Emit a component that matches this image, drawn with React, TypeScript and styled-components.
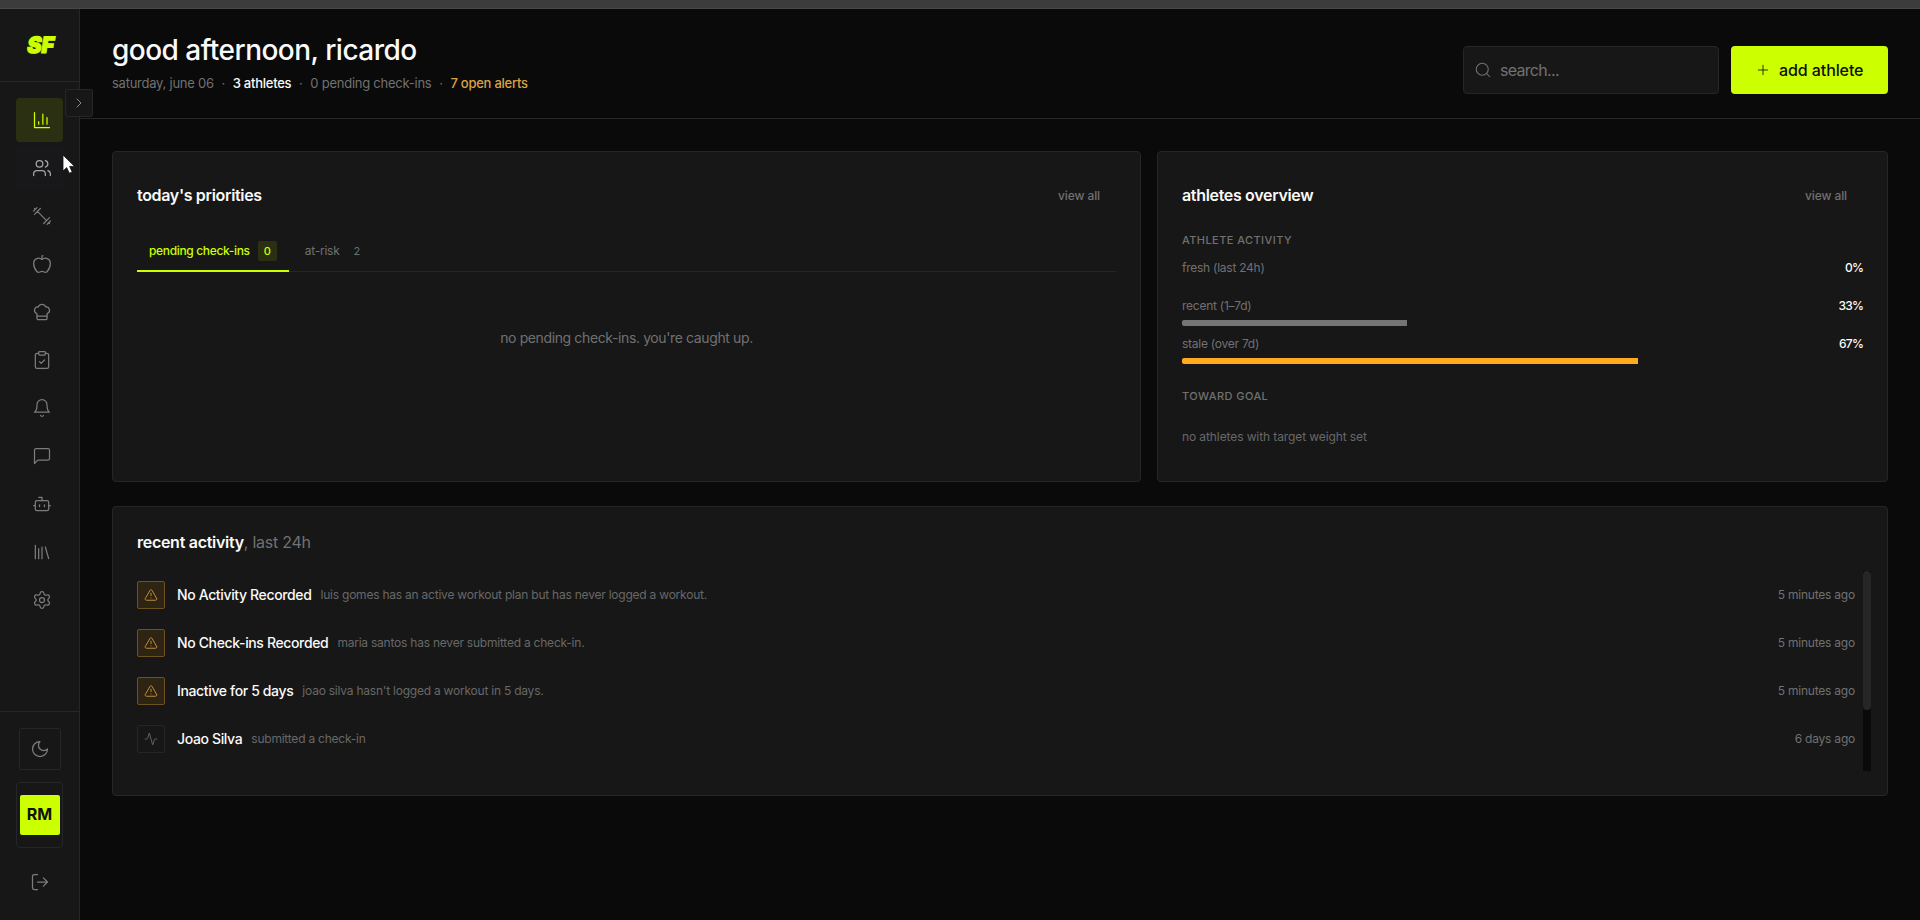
import React from "react";
import styled, { createGlobalStyle, css } from "styled-components";
import {
  Activity, Apple, Bot, ChefHat, ChevronRight, ClipboardCheck, Plus, Search, Settings, TriangleAlert, Users,
} from "lucide-react";

const c = {
  page: "#0a0a0a",
  panel: "#171717",
  line: "#262626",
  muted: "#717171",
  dim: "#686868",
  text: "#fafafa",
  lime: "#ccff00",
  amber: "#ffab1f",
};

const GlobalStyle = createGlobalStyle`
  *, *::before, *::after { box-sizing: border-box; }
  body {
    margin: 0;
    background: ${c.page};
    color: ${c.text};
    font-family: Inter, "Liberation Sans", sans-serif;
    overflow: hidden;
  }
  button, input { font-family: inherit; }
  svg { display: block; flex: none; }
`;

const Screen = styled.div`
  display: flex;
  flex-direction: column;
  height: 920px;
`;
const WindowEdge = styled.div`
  flex: none;
  height: 9px;
  background: #3c3c3c;
  border-bottom: 1px solid #484848;
`;
const Body = styled.div`
  flex: 1;
  display: flex;
  min-height: 0;
`;

const Sidebar = styled.aside`
  position: relative;
  flex: none;
  width: 80px;
  display: flex;
  flex-direction: column;
  background: ${c.panel};
  border-right: 1px solid ${c.line};
`;
const Brand = styled.div`
  height: 73px;
  display: flex;
  align-items: center;
  justify-content: center;
  border-bottom: 1px solid ${c.line};
`;
const Nav = styled.nav`
  flex: 1;
  display: flex;
  flex-direction: column;
  gap: 4px;
  padding: 16px;
`;
const NavItem = styled.a<{ $state?: "active" | "hover" }>`
  height: 44px;
  display: flex;
  align-items: center;
  padding-left: 16px;
  border-radius: 4px;
  color: #7c7c7c;
  ${(p) => p.$state === "active" && css`background: #2b3012; color: ${c.lime};`}
  ${(p) => p.$state === "hover" && css`background: #18181a; color: #a6a6a6;`}
`;
const Collapse = styled.button`
  position: absolute;
  left: 65px;
  top: 80px;
  width: 28px;
  height: 28px;
  padding: 0;
  display: flex;
  align-items: center;
  justify-content: center;
  background: ${c.panel};
  border: 1px solid ${c.line};
  border-radius: 2px;
  color: #8a8a8a;
`;
const SideFoot = styled.div`
  display: flex;
  flex-direction: column;
  align-items: center;
  height: 209px;
  padding-top: 16px;
  border-top: 1px solid ${c.line};
  color: #7c7c7c;
`;
const ThemeButton = styled.button`
  width: 42px;
  height: 42px;
  padding: 0;
  display: flex;
  align-items: center;
  justify-content: center;
  background: none;
  border: 1px solid ${c.line};
  border-radius: 2px;
  color: inherit;
`;
const Profile = styled.div`
  width: 47px;
  height: 66px;
  margin: 12px 0 24px;
  display: flex;
  align-items: center;
  justify-content: center;
  border: 1px solid ${c.line};
  border-radius: 4px;
`;
const Avatar = styled.div`
  flex: none;
  width: 40px;
  height: 40px;
  border-radius: 2px;
  background: ${c.lime};
  color: #111;
  font-size: 16px;
  font-weight: 700;
  line-height: 39px;
  text-align: center;
`;

const Main = styled.main`
  flex: 1;
  min-width: 0;
  display: flex;
  flex-direction: column;
`;
const Header = styled.header`
  height: 110px;
  display: flex;
  justify-content: space-between;
  padding: 24px 32px 0;
  border-bottom: 1px solid ${c.line};
`;
const Greeting = styled.h1`
  margin: 0 0 6px;
  font-size: 28px;
  font-weight: 500;
  line-height: 34px;
  letter-spacing: -0.52px;
`;
const Summary = styled.div`
  display: flex;
  font-size: 13px;
  line-height: 20px;
  letter-spacing: -0.25px;
  color: ${c.muted};
`;
const Fact = styled.span<{ $tone?: "strong" | "warn" }>`
  ${(p) => p.$tone === "strong" && css`color: ${c.text}; font-weight: 500;`}
  ${(p) => p.$tone === "warn" && css`color: #dba244; font-weight: 500;`}
`;
const Dot = styled.span`
  width: 19px;
  text-align: center;
`;
const Tools = styled.div`
  display: flex;
  gap: 12px;
  padding-top: 13px;
`;
const SearchBox = styled.label`
  width: 256px;
  height: 48px;
  display: flex;
  align-items: center;
  gap: 8px;
  padding: 0 10px 1px;
  background: ${c.panel};
  border: 1px solid ${c.line};
  border-radius: 4px;
  color: ${c.muted};
`;
const SearchInput = styled.input`
  flex: 1;
  min-width: 0;
  padding: 0;
  border: 0;
  outline: 0;
  background: none;
  font-size: 16px;
  letter-spacing: -0.7px;
  &::placeholder { color: ${c.muted}; opacity: 1; }
`;
const AddButton = styled.button`
  width: 157px;
  height: 48px;
  display: flex;
  align-items: center;
  gap: 8px;
  padding: 0 0 1px 24px;
  border: 0;
  border-radius: 4px;
  background: ${c.lime};
  color: #0f0f0f;
  font-size: 16px;
  font-weight: 500;
  letter-spacing: -0.09px;
  white-space: nowrap;
`;

const Content = styled.div`
  padding: 32px;
  display: grid;
  grid-template-columns: 1029px 731px;
  grid-template-rows: 331px 290px;
  column-gap: 16px;
  row-gap: 24px;
`;
const Card = styled.section<{ $wide?: boolean }>`
  min-width: 0;
  padding: 24px;
  background: ${c.panel};
  border: 1px solid ${c.line};
  border-radius: 4px;
  ${(p) => p.$wide && css`grid-column: 1 / -1; padding-right: 16px;`}
`;
const CardHead = styled.div`
  height: 38px;
  display: flex;
  align-items: center;
  justify-content: space-between;
`;
const CardTitle = styled.h2`
  margin: 0;
  font-size: 16px;
  font-weight: 600;
  line-height: 24px;
  letter-spacing: -0.33px;
`;
const ActivityTitle = styled(CardTitle)`
  line-height: 23px;
  letter-spacing: -0.28px;
`;
const TitleNote = styled.span`
  font-weight: 400;
  letter-spacing: -0.25px;
  color: ${c.muted};
`;
const ViewAll = styled.a`
  padding: 0 16px;
  font-size: 12px;
  font-weight: 500;
  letter-spacing: -0.1px;
  color: ${c.muted};
`;

const Tabs = styled.div`
  height: 40px;
  margin-top: 18px;
  display: flex;
  gap: 4px;
  box-shadow: inset 0 -1px ${c.line};
`;
const Tab = styled.div<{ $active?: boolean }>`
  display: flex;
  align-items: center;
  gap: 8px;
  padding: 0 12px 1px;
  font-size: 12px;
  color: ${(p) => (p.$active ? c.lime : c.muted)};
  font-weight: ${(p) => (p.$active ? 500 : 400)};
  border-bottom: 2px solid ${(p) => (p.$active ? c.lime : "transparent")};
`;
const TabLabel = styled.span<{ $active?: boolean }>`
  letter-spacing: ${(p) => (p.$active ? "-0.34px" : "-0.25px")};
`;
const Count = styled.span<{ $active?: boolean }>`
  height: 20px;
  padding: 0 6px;
  border-radius: 2px;
  font-size: 11px;
  line-height: 20px;
  background: ${(p) => (p.$active ? "#2b3012" : "transparent")};
`;
const Empty = styled.p`
  margin: 56px 0 0;
  text-align: center;
  font-size: 14px;
  line-height: 20px;
  letter-spacing: -0.38px;
  color: ${c.muted};
`;

const SectionLabel = styled.h3<{ $top: number }>`
  margin: ${(p) => p.$top}px 0 10px;
  font-size: 11px;
  font-weight: 500;
  line-height: 18px;
  letter-spacing: 0.42px;
  text-transform: uppercase;
  color: ${c.muted};
`;
const Meter = styled.div`
  margin-bottom: 9px;
`;
const MeterText = styled.div`
  display: flex;
  justify-content: space-between;
  margin-bottom: 5px;
  font-size: 12px;
  line-height: 18px;
  letter-spacing: -0.25px;
  color: ${c.muted};
`;
const Percent = styled.span`
  color: ${c.text};
  font-weight: 500;
  letter-spacing: -0.8px;
`;
const Track = styled.div`
  height: 6px;
  border-radius: 2px;
  overflow: hidden;
`;
const Fill = styled.div<{ $color: string }>`
  height: 100%;
  background: ${(p) => p.$color};
`;
const GoalNote = styled.p`
  margin: 23px 0 0;
  font-size: 12px;
  line-height: 18px;
  letter-spacing: -0.1px;
  color: ${c.dim};
`;

const Feed = styled.div`
  display: flex;
  height: 200px;
  margin-top: 17px;
`;
const FeedList = styled.ul`
  flex: 1;
  margin: 0;
  padding: 0 8px 0 0;
  list-style: none;
`;
const FeedRow = styled.li`
  height: 48px;
  display: flex;
  align-items: center;
`;
const FeedIcon = styled.span<{ $warn: boolean }>`
  flex: none;
  width: 28px;
  height: 28px;
  margin-right: 12px;
  display: flex;
  align-items: center;
  justify-content: center;
  border: 1px solid ${(p) => (p.$warn ? "#71501f" : c.line)};
  border-radius: 2px;
  background: ${(p) => (p.$warn ? "#2d2414" : "transparent")};
  color: ${(p) => (p.$warn ? "#cf9338" : "#6c6c6c")};
`;
const FeedTitle = styled.span`
  margin-right: 9px;
  font-size: 14px;
  font-weight: 500;
  line-height: 20px;
  letter-spacing: -0.36px;
`;
const FeedDetail = styled.span`
  flex: 1;
  font-size: 12px;
  line-height: 18px;
  letter-spacing: -0.225px;
  color: ${c.dim};
`;
const FeedTime = styled.span`
  font-size: 12px;
  line-height: 18px;
  letter-spacing: -0.22px;
  color: ${c.muted};
`;
const ScrollTrack = styled.div`
  width: 8px;
  background: ${c.page};
`;
const ScrollThumb = styled.div`
  height: 139px;
  border-radius: 4px;
  background: #262626;
`;
const Pointer = styled.svg`
  position: absolute;
  left: 62px;
  top: 154px;
`;

const Glyph = ({ d, size = 20 }: { d: string; size?: number }) => (
  <svg width={size} height={size} viewBox="0 0 24 24" fill="none" stroke="currentColor" strokeWidth={1.5} strokeLinecap="round" strokeLinejoin="round">
    <path d={d} />
  </svg>
);

const Logo = () => (
  <svg width="60" height="40" viewBox="0 0 60 40" fill={c.lime} stroke={c.lime} strokeWidth="1.2">
    <text x="0" y="0" transform="translate(16.2 28.2) skewX(-9)" fontFamily="Inter" fontWeight="900" fontSize="22.5" textLength="27" lengthAdjust="spacingAndGlyphs">SF</text>
  </svg>
);

const line = { size: 20, strokeWidth: 1.5 };
const nav: { icon: React.ReactNode; state?: "active" | "hover" }[] = [
  { icon: <Glyph d="M3 3v18h18M18 17V9M13 17V5M8 17v-3" />, state: "active" },
  { icon: <Users {...line} />, state: "hover" },
  { icon: <Glyph d="m6.5 6.5 11 11M21 21l-1-1M3 3l1 1M18 22l4-4M2 6l4-4M3 10l7-7M14 21l7-7" /> },
  { icon: <Apple {...line} /> },
  { icon: <ChefHat {...line} /> },
  { icon: <ClipboardCheck {...line} /> },
  { icon: <Glyph d="M6 8a6 6 0 0 1 12 0c0 7 3 9 3 9H3s3-2 3-9M10.3 21a1.94 1.94 0 0 0 3.4 0" /> },
  { icon: <Glyph d="M21 15a2 2 0 0 1-2 2H7l-4 4V5a2 2 0 0 1 2-2h14a2 2 0 0 1 2 2z" /> },
  { icon: <Bot {...line} /> },
  { icon: <Glyph d="m16 6 4 14M12 6v14M8 8v12M4 4v16" /> },
  { icon: <Settings {...line} /> },
];

const meters = [
  { label: "fresh (last 24h)", value: 0, color: c.lime },
  { label: "recent (1–7d)", value: 33, color: "#757575" },
  { label: "stale (over 7d)", value: 67, color: c.amber },
];

const feed = [
  { title: "No Activity Recorded", detail: "luis gomes has an active workout plan but has never logged a workout.", time: "5 minutes ago", warn: true },
  { title: "No Check-ins Recorded", detail: "maria santos has never submitted a check-in.", time: "5 minutes ago", warn: true },
  { title: "Inactive for 5 days", detail: "joao silva hasn't logged a workout in 5 days.", time: "5 minutes ago", warn: true },
  { title: "Joao Silva", detail: "submitted a check-in", time: "6 days ago", warn: false },
];

export default function App() {
  return (
    <Screen>
      <GlobalStyle />
      <WindowEdge />
      <Body>
        <Sidebar>
          <Brand><Logo /></Brand>
          <Nav>
            {nav.map((n, i) => <NavItem key={i} $state={n.state}>{n.icon}</NavItem>)}
          </Nav>
          <SideFoot>
            <ThemeButton><Glyph d="M12 3a6 6 0 0 0 9 9 9 9 0 1 1-9-9Z" /></ThemeButton>
            <Profile><Avatar>RM</Avatar></Profile>
            <Glyph d="M9 21H5a2 2 0 0 1-2-2V5a2 2 0 0 1 2-2h4M16 17l5-5-5-5M21 12H9" />
          </SideFoot>
          <Collapse><ChevronRight size={16} strokeWidth={1.5} /></Collapse>
        </Sidebar>
        <Main>
          <Header>
            <div>
              <Greeting>good afternoon, ricardo</Greeting>
              <Summary>
                <Fact>saturday, june 06</Fact><Dot>·</Dot>
                <Fact $tone="strong">3 athletes</Fact><Dot>·</Dot>
                <Fact>0 pending check-ins</Fact><Dot>·</Dot>
                <Fact $tone="warn">7 open alerts</Fact>
              </Summary>
            </div>
            <Tools>
              <SearchBox>
                <Search size={18} strokeWidth={1.4} />
                <SearchInput placeholder="search..." />
              </SearchBox>
              <AddButton><Plus size={16} strokeWidth={1.25} />add athlete</AddButton>
            </Tools>
          </Header>
          <Content>
            <Card>
              <CardHead><CardTitle>today's priorities</CardTitle><ViewAll>view all</ViewAll></CardHead>
              <Tabs>
                <Tab $active><TabLabel $active>pending check-ins</TabLabel><Count $active>0</Count></Tab>
                <Tab><TabLabel>at-risk</TabLabel><Count>2</Count></Tab>
              </Tabs>
              <Empty>no pending check-ins. you're caught up.</Empty>
            </Card>
            <Card>
              <CardHead><CardTitle>athletes overview</CardTitle><ViewAll>view all</ViewAll></CardHead>
              <SectionLabel $top={17}>athlete activity</SectionLabel>
              {meters.map((m) => (
                <Meter key={m.label}>
                  <MeterText><span>{m.label}</span><Percent>{m.value}%</Percent></MeterText>
                  <Track><Fill $color={m.color} style={{ width: `${m.value}%` }} /></Track>
                </Meter>
              ))}
              <SectionLabel $top={23}>toward goal</SectionLabel>
              <GoalNote>no athletes with target weight set</GoalNote>
            </Card>
            <Card $wide>
              <ActivityTitle>recent activity<TitleNote>, last 24h</TitleNote></ActivityTitle>
              <Feed>
                <FeedList>
                  {feed.map((f) => (
                    <FeedRow key={f.title}>
                      <FeedIcon $warn={f.warn}>
                        {f.warn ? <TriangleAlert size={14} strokeWidth={1.6} /> : <Activity size={14} strokeWidth={1.5} />}
                      </FeedIcon>
                      <FeedTitle>{f.title}</FeedTitle>
                      <FeedDetail>{f.detail}</FeedDetail>
                      <FeedTime>{f.time}</FeedTime>
                    </FeedRow>
                  ))}
                </FeedList>
                <ScrollTrack><ScrollThumb /></ScrollTrack>
              </Feed>
            </Card>
          </Content>
        </Main>
      </Body>
      <Pointer width="14" height="22" viewBox="0 0 14 22">
        <path d="M1 1v16l3.7-3.4 2.6 5.6 2.9-1.3-2.6-5.5h5z" fill="#fff" stroke="#111" strokeWidth="0.8" />
      </Pointer>
    </Screen>
  );
}
